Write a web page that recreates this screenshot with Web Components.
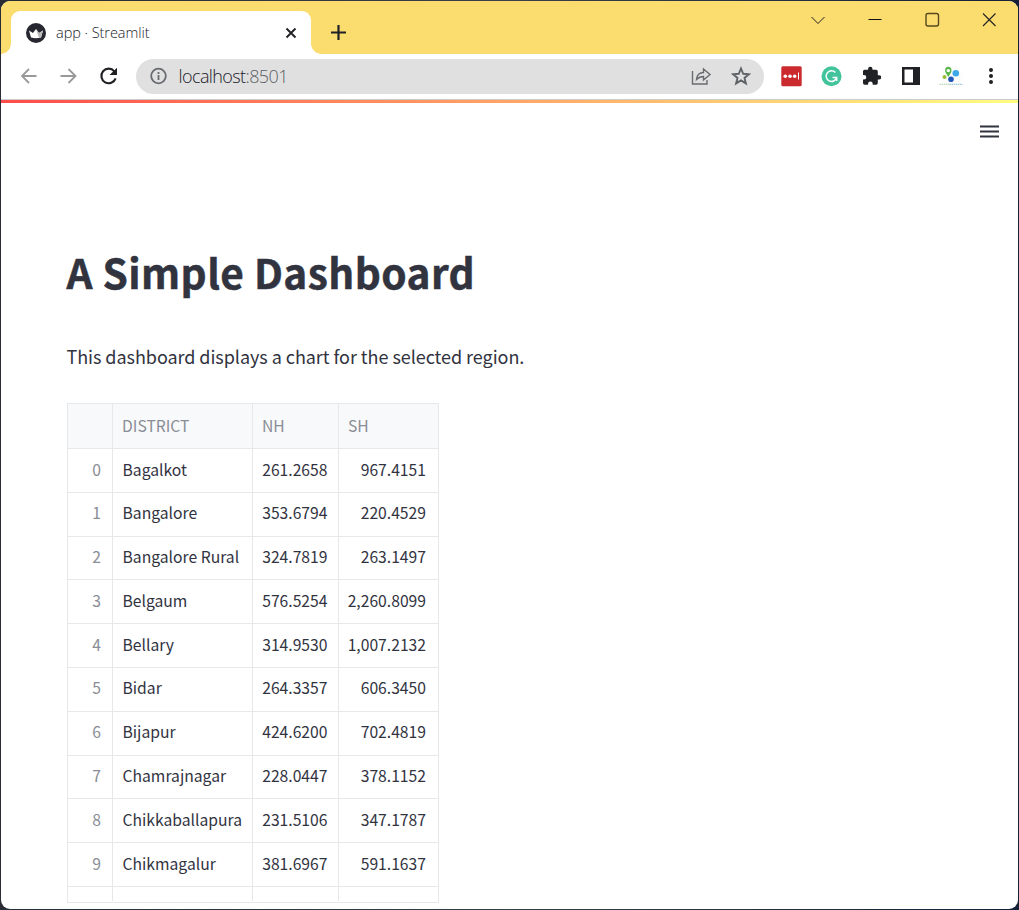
<!DOCTYPE html>
<html lang="en">
<head>
<meta charset="utf-8">
<title>app · Streamlit</title>
<style>
html,body{margin:0;width:1019px;height:910px;overflow:hidden;background:linear-gradient(90deg,#292c35,#3b3f49 50%,#162138)}
body{font-family:"Noto Sans CJK JP","Noto Sans CJK SC","Open Sans",sans-serif}
</style>
</head>
<body>
<browser-window>
  <tab-strip slot="tabs"><browser-tab>app · Streamlit</browser-tab></tab-strip>
  <browser-toolbar slot="toolbar"></browser-toolbar>
  <dashboard-page>
    <span slot="title">A Simple Dashboard</span>
    <span slot="intro">This dashboard displays a chart for the selected region.</span>
    <data-frame></data-frame>
  </dashboard-page>
</browser-window>
<script>
const define = (name, markup, setup) => customElements.define(name, class extends HTMLElement {
  constructor() {
    super();
    const root = this.attachShadow({ mode: 'open' });
    root.innerHTML = markup;
    if (setup) setup(root, this);
  }
});

define('browser-window', `<style>
:host{display:block;height:910px;box-sizing:border-box;padding:1px}
main{display:flex;flex-direction:column;width:1017px;height:908px;background:#fff;border-radius:9px;overflow:hidden}
</style><main><slot name="tabs"></slot><slot name="toolbar"></slot><slot></slot></main>`);

define('tab-strip', `<style>
:host{display:flex;height:53px;flex:none;background:#fbdc6f;padding-left:10px;box-sizing:border-box}
.new{width:16px;height:16px;margin:23px 0 0 19px}
.controls{display:flex;margin:10px 21px 0 auto;gap:41px;height:18px;align-items:center}
svg{display:block}
</style><slot></slot>
<svg class="new" viewBox="0 0 16 16"><path d="M8.500 1v15M1 8.500h15" stroke="#202124" stroke-width="2.200"/></svg>
<div class="controls">
<svg width="16" height="18" viewBox="0 0 16 18"><path d="M1.500 6 8 12.500 14.500 6" fill="none" stroke="#222" stroke-width="1"/></svg>
<svg width="16" height="18" viewBox="0 0 16 18"><path d="M1.500 8.500h13" stroke="#111"/></svg>
<svg width="16" height="18" viewBox="0 0 16 18"><rect x="2" y="2.500" width="12.500" height="12.500" rx="2" fill="none" stroke="#54491f" stroke-width="1.400"/></svg>
<svg width="16" height="18" viewBox="0 0 16 18"><path d="m2 2.500 12.500 12.500m0-12.500L2 15" stroke="#222" stroke-width="1.100"/></svg>
</div>`);

define('browser-tab', `<style>
:host{display:flex;position:relative;box-sizing:border-box;width:300px;height:43px;margin-top:10px;padding:0 14px 0 15px;align-items:center;background:#fff;border-radius:9px 9px 0 0;font:360 14.500px "Open Sans",sans-serif;color:#202028}
:host::before,:host::after{content:"";position:absolute;bottom:0;width:10px;height:10px}
:host::before{left:-10px;background:radial-gradient(circle at 0 0,#0000 9.500px,#fff 10px)}
:host::after{right:-10px;background:radial-gradient(circle at 100% 0,#0000 9.500px,#fff 10px)}
span{margin:0 auto 0 10px;letter-spacing:-.05px}
svg{flex:none}
</style>
<svg width="20" height="20" viewBox="0 0 20 20"><circle cx="10" cy="10" r="10" fill="#262730"/><path d="M3 7.500 7 10l3-4 3 4 4-2.500-2 7q-5 1.500-10 0z" fill="#fff"/><path d="m10 6 3 4 4-2.500-2 7-2 .4z" fill="#bbb"/></svg>
<span><slot></slot></span>
<svg width="12" height="12" viewBox="0 0 12 12"><path d="m1.500 1.500 9 9m0-9-9 9" stroke="#202124" stroke-width="1.900"/></svg>`);

define('browser-toolbar', `<style>
:host{display:flex;box-sizing:border-box;height:46px;flex:none;align-items:center;padding:0 17px 1px 17px;border-bottom:1px solid #ccc}
svg{display:block;flex:none}
.nav{display:flex;gap:20px}
.address{display:flex;align-items:center;box-sizing:border-box;width:628px;height:35px;border-radius:18px;background:#e0e0e0;margin-left:18px;padding:0 13px 0 12px}
.url{font:360 18px "Open Sans",sans-serif;letter-spacing:-.6px;color:#181828;margin:0 auto 0 10.500px}.url i{font-style:normal;color:#5c6066}
.ext{display:flex;gap:20px;margin-left:auto;align-items:center}
.address svg+svg{margin-left:19px}
</style>
<div class="nav">
<svg width="20" height="20" viewBox="0 0 20 20"><path d="M18.500 10H4m7-7-7 7 7 7" fill="none" stroke="#999" stroke-width="1.800"/></svg>
<svg width="20" height="20" viewBox="0 0 20 20"><path d="M2.500 10H17.500m-7-7 7 7-7 7" fill="none" stroke="#999" stroke-width="1.800"/></svg>
<svg width="20" height="20" viewBox="0 0 20 20"><path d="M16.300 5.300a7.300 7.300 0 1 0 1.300 7" fill="none" stroke="#202124" stroke-width="2.100"/><path d="M19 1.800V9h-7.500z" fill="#202124"/></svg>
</div>
<div class="address">
<svg width="20" height="20" viewBox="0 0 20 20"><circle cx="10.500" cy="10" r="7.300" fill="none" stroke="#686b70" stroke-width="1.800"/><path d="M10.500 9v5m0-8v2" stroke="#686b70" stroke-width="1.800"/></svg>
<span class="url">localhost<i>:8501</i></span>
<svg width="21" height="20" viewBox="0 0 21 20"><path d="M1.500 5v13h14.500v-4M5.500 13.500c.5-5 3-7 7-7V3L19 8.500 12.500 14v-3.500c-3 0-5 1-7 3z" fill="none" stroke="#686b70" stroke-width="1.400"/></svg>
<svg width="20" height="20" viewBox="0 0 20 20"><path d="m10 2.500 2.200 5.300 5.700.4-4.400 3.700 1.400 5.500-4.900-3-4.900 3 1.400-5.500L2.100 8.200l5.700-.4z" fill="none" stroke="#5f6368" stroke-width="1.900"/></svg>
</div>
<div class="ext">
<svg width="20" height="20" viewBox="0 0 20 20" style="overflow:visible"><rect x=".3" y=".3" width="20.400" height="20" rx="1.500" fill="#cb2b2f"/><g fill="#fff"><circle cx="4.300" cy="10.200" r="1.800"/><circle cx="9" cy="10.200" r="1.800"/><circle cx="13.700" cy="10.200" r="1.800"/><path d="M17 6.500h1v7h-1z"/></g></svg>
<svg width="20" height="20" viewBox="0 0 20 20" style="overflow:visible"><circle cx="10.500" cy="10.300" r="10" fill="#43c39b"/><path d="M14.400 6.600a5.300 5.300 0 1 0 1.200 4.900M11.500 11.500h4.200v3.500" fill="none" stroke="#fff" stroke-width="1.500"/></svg>
<svg width="20" height="20" viewBox="-1 0 20 20"><path fill="#202124" d="M17 9.200h-1.200V5.400q0-1.700-1.700-1.700h-3.600V3a2.200 2.200 0 0 0-4.400 0v.7H2.500Q1 3.700 1 5.200v3.700h1a2.300 2.300 0 0 1 0 4.600H1v3.600Q1 18.700 2.500 18.700h3.600v-1a2.300 2.300 0 0 1 4.600 0v1h3.400q1.700 0 1.700-1.600v-3.500H17a2.200 2.200 0 0 0 0-4.400z"/></svg>
<svg width="20" height="20" viewBox="0 0 20 20"><path fill="#202124" fill-rule="evenodd" d="M1 1h18v18H1zm2.500 2.500v13H12v-13z"/></svg>
<svg width="20" height="20" viewBox="0 0 20 20" style="overflow:visible"><circle cx="10.500" cy="10" r="11" fill="#fcfcfc"/><path d="M7.300 11 4.300 6Q3.300 1 7.300.8q4 .2 3 5.200z" fill="#56b547"/><circle cx="7.300" cy="4.600" r="1.700" fill="#fff"/><circle cx="3.500" cy="11" r="2" fill="#96bd3a"/><circle cx="14.800" cy="7.200" r="3.300" fill="#3da9e9"/><circle cx="10" cy="13.300" r="2.800" fill="#2357b8"/><path d="M-1.500 18.300h10" stroke="#a9d3a8" stroke-dasharray="1.500 .6"/><path d="M8.500 18.300h13" stroke="#83bfd4" stroke-dasharray="1.500 .6"/></svg>
<svg width="20" height="20" viewBox="0 0 20 20"><g fill="#202124"><circle cx="10" cy="4" r="2"/><circle cx="10" cy="10" r="2"/><circle cx="10" cy="16" r="2"/></g></svg>
</div>`);

define('dashboard-page', `<style>
:host{display:block;flex:1;min-height:0}
.bar{height:3px;background:linear-gradient(90deg,#ff4b4b,#fffd80)}
header{height:57px;display:flex;justify-content:flex-end;align-items:center;padding-right:19px}
section{padding:85px 66px 0}
h1{font-size:40.600px;line-height:54px;letter-spacing:.42px;margin:0 0 0 -.5px;font-weight:700;color:#31333f;-webkit-text-stroke:.5px #31333f}
p{font-size:18px;line-height:32px;letter-spacing:-.05px;color:#31333f;margin:41px 0 31px -.5px}
</style><div class="bar"></div>
<header><svg width="19" height="14" viewBox="0 0 19 14"><path d="M0 1.500h19M0 6.500h19M0 11.500h19" stroke="#31333f" stroke-width="1.800"/></svg></header>
<section><h1><slot name="title"></slot></h1><p><slot name="intro"></slot></p><slot></slot></section>`);

define('data-frame', `<style>
:host{display:block;box-sizing:border-box;width:372px;height:500px;border:1px solid #e6e8ea;overflow:hidden;font-size:15.700px;color:#31333f}
.row{display:grid;grid-template-columns:45px 140px 86px 99px;height:43.800px;box-sizing:border-box;border-bottom:1px solid #e6e8ea}
.row.head{height:45px;background:#f8f9fb;color:#898d95}
.row span{display:flex;align-items:center;padding:0 9px 2px;border-right:1px solid #e6e8ea;white-space:pre;min-width:0}
.row:not(.head) span{padding-bottom:2.800px}
.row span:last-child{border:0;padding-right:12px}
.row:not(.head) span:nth-child(n+3){justify-content:flex-end;padding-left:0}
.row:not(.head) span:nth-child(2){padding-left:9.500px}
.row:not(.head) span:nth-child(3){padding-right:10.500px}
.row span:first-child{justify-content:flex-end;padding-right:11px;color:#898d95}
.row.tail{border:0;height:14px}
</style><div class="row head"><span></span><span>DISTRICT</span><span>NH</span><span>SH</span></div>`, root => {
  const rows = [['Bagalkot','261.2658','967.4151'],['Bangalore','353.6794','220.4529'],['Bangalore Rural','324.7819','263.1497'],['Belgaum','576.5254','2,260.8099'],['Bellary','314.9530','1,007.2132'],['Bidar','264.3357','606.3450'],['Bijapur','424.6200','702.4819'],['Chamrajnagar','228.0447','378.1152'],['Chikkaballapura','231.5106','347.1787'],['Chikmagalur','381.6967','591.1637']];
  const add = (cells, cls) => {
    const row = document.createElement('div');
    row.className = cls;
    for (const text of cells) { const s = document.createElement('span'); s.textContent = text; row.append(s); }
    root.append(row);
  };
  rows.forEach((r, i) => add([i, ...r], 'row'));
  add(['', '', '', ''], 'row tail');
});
</script>
</body>
</html>
